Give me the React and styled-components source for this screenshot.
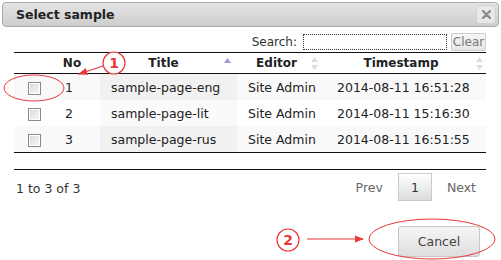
import React from "react";
import styled, { createGlobalStyle } from "styled-components";

const Global = createGlobalStyle`
  html, body {
    margin: 0;
    padding: 0;
    background: #fff;
  }
  body {
    font-family: "DejaVu Sans", Verdana, sans-serif;
    font-size: 12px;
    color: #222;
  }
`;

const Dialog = styled.div`
  position: relative;
  width: 501px;
  height: 260px;
  padding: 2px;
  box-sizing: border-box;
  overflow: hidden;
`;

const TitleBar = styled.div`
  height: 25px;
  box-sizing: border-box;
  border: 1px solid #aaa;
  border-radius: 4px;
  background: linear-gradient(to bottom, #e4e4e4, #cecece);
  display: flex;
  align-items: center;
  justify-content: space-between;
  padding: 0 2px 0 13px;
`;

const Title = styled.span`
  font-weight: bold;
  font-size: 12.5px;
  color: #222;
`;

const CloseButton = styled.button`
  width: 20px;
  height: 19px;
  padding: 0;
  border: 1px solid #d0d0d0;
  border-radius: 3px;
  background: #e8e8e8;
  display: flex;
  align-items: center;
  justify-content: center;
`;

const Content = styled.div`
  padding: 6px 13px 0 12px;
`;

const SearchRow = styled.div`
  display: flex;
  justify-content: flex-end;
  align-items: center;
  height: 18px;
  color: #333;
  font-size: 12px;
`;

const SearchInput = styled.input`
  width: 144px;
  height: 16px;
  box-sizing: border-box;
  border: 1px dotted #333;
  outline: none;
  padding: 0;
  margin: 0 4px 0 6px;
`;

const SmallButton = styled.button`
  width: 35px;
  height: 18px;
  padding: 0;
  border: 1px solid #ccc;
  border-radius: 2px;
  background: linear-gradient(to bottom, #f6f6f6, #e6e6e6);
  color: #777;
  font-family: inherit;
  font-size: 12px;
`;

const Table = styled.table`
  width: 472px;
  margin-top: 1px;
  border-collapse: collapse;
  table-layout: fixed;
  border-top: 1px solid #111;
  border-bottom: 1px solid #111;
`;

const Th = styled.th`
  position: relative;
  height: 20px;
  padding: 0 10px 0 0;
  font-weight: bold;
  font-size: 12px;
  color: #222;
  text-align: center;
  border-bottom: 1px solid #111;
`;

const SortIcon = styled.svg`
  position: absolute;
  right: ${({ $right }) => $right}px;
  top: 4px;
`;

const Tr = styled.tr`
  background: ${({ $odd }) => ($odd ? "#f9f9f9" : "#fff")};
  & + & td {
    border-top: 1px solid #ddd;
  }
`;

const Td = styled.td`
  height: 26px;
  padding: 0 0 0 ${({ $pad }) => $pad}px;
  text-align: ${({ $center }) => ($center ? "center" : "left")};
  font-size: 12.5px;
  color: #222;
  background: ${({ $sorted, $odd }) =>
    $sorted ? ($odd ? "#f1f1f1" : "#fafafa") : "transparent"};
`;

const Check = styled.input`
  appearance: none;
  width: 13px;
  height: 13px;
  margin: 0;
  vertical-align: middle;
  border: 1px solid #8a8a8a;
  box-sizing: border-box;
  background: linear-gradient(135deg, #d8d8d8, #f8f8f8);
  box-shadow: inset 0 0 0 1px #fff;
`;

const Footer = styled.div`
  margin-top: 16px;
  border-top: 1px solid #111;
  width: 472px;
  display: flex;
  justify-content: space-between;
  align-items: flex-start;
  padding-top: 3px;
`;

const Info = styled.div`
  padding: 8px 0 0 2px;
  font-size: 12.5px;
  color: #333;
`;

const Pager = styled.div`
  display: flex;
  align-items: center;
  gap: 15px;
  padding-right: 10px;
`;

const PageLink = styled.span`
  color: #666;
  font-size: 12.5px;
`;

const PageButton = styled.span`
  width: 34px;
  height: 28px;
  box-sizing: border-box;
  display: flex;
  align-items: center;
  justify-content: center;
  border: 1px solid #cacaca;
  background: linear-gradient(to bottom, #fff, #dcdcdc);
  color: #333;
  font-size: 12.5px;
`;

const Actions = styled.div`
  display: flex;
  justify-content: flex-end;
  padding: 25px 6px 0 0;
`;

const CancelButton = styled.button`
  width: 82px;
  height: 31px;
  border: 1px solid #c6c6c6;
  border-radius: 3px;
  background: linear-gradient(to bottom, #f6f6f6, #dedede);
  color: #444;
  font-family: inherit;
  font-size: 12.5px;
`;

const Overlay = styled.svg`
  position: absolute;
  left: 0;
  top: 0;
  pointer-events: none;
`;

const rows = [
  { no: 1, title: "sample-page-eng", editor: "Site Admin", time: "2014-08-11 16:51:28" },
  { no: 2, title: "sample-page-lit", editor: "Site Admin", time: "2014-08-11 15:16:30" },
  { no: 3, title: "sample-page-rus", editor: "Site Admin", time: "2014-08-11 16:51:55" },
];

const Unsorted = ({ right }) => (
  <SortIcon $right={right} width="7" height="14" viewBox="0 0 7 14">
    <path d="M3.5 0 L7 5 L0 5 Z" fill="#dcdcdc" />
    <path d="M0 8 L7 8 L3.5 13 Z" fill="#dcdcdc" />
  </SortIcon>
);

const Asc = ({ right }) => (
  <SortIcon $right={right} width="7" height="14" viewBox="0 0 7 14">
    <path d="M3.5 1 L7 6 L0 6 Z" fill="#9a9ae0" />
  </SortIcon>
);

const red = "#e8383d";

const Badge = ({ cx, cy, n }) => (
  <g>
    <circle cx={cx} cy={cy} r="11" fill="#fff" stroke={red} strokeWidth="1.2" />
    <text
      x={cx}
      y={cy + 5}
      textAnchor="middle"
      fontFamily="'DejaVu Sans', sans-serif"
      fontWeight="bold"
      fontSize="14"
      fill={red}
    >
      {n}
    </text>
  </g>
);

export default function App() {
  return (
    <>
      <Global />
      <Dialog>
        <TitleBar>
          <Title>Select sample</Title>
          <CloseButton aria-label="close">
            <svg width="9" height="9" viewBox="0 0 9 9">
              <path d="M1 1 L8 8 M8 1 L1 8" stroke="#888" strokeWidth="2.2" strokeLinecap="round" />
            </svg>
          </CloseButton>
        </TitleBar>
        <Content>
          <SearchRow>
            <span>Search:</span>
            <SearchInput />
            <SmallButton>Clear</SmallButton>
          </SearchRow>
          <Table>
            <colgroup>
              <col style={{ width: 40 }} />
              <col style={{ width: 46 }} />
              <col style={{ width: 137 }} />
              <col style={{ width: 89 }} />
              <col style={{ width: 160 }} />
            </colgroup>
            <thead>
              <tr>
                <Th />
                <Th>No</Th>
                <Th>
                  Title
                  <Asc right={6} />
                </Th>
                <Th>
                  Editor
                  <Unsorted right={8} />
                </Th>
                <Th>
                  Timestamp
                  <Unsorted right={3} />
                </Th>
              </tr>
            </thead>
            <tbody>
              {rows.map((r, i) => {
                const odd = i % 2 === 0;
                return (
                  <Tr key={r.no} $odd={odd}>
                    <Td $center $pad={0}>
                      <Check type="checkbox" />
                    </Td>
                    <Td $pad={11}>{r.no}</Td>
                    <Td $pad={11} $sorted $odd={odd}>
                      {r.title}
                    </Td>
                    <Td $pad={11}>{r.editor}</Td>
                    <Td $pad={11}>{r.time}</Td>
                  </Tr>
                );
              })}
            </tbody>
          </Table>
          <Footer>
            <Info>1 to 3 of 3</Info>
            <Pager>
              <PageLink>Prev</PageLink>
              <PageButton>1</PageButton>
              <PageLink>Next</PageLink>
            </Pager>
          </Footer>
          <Actions>
            <CancelButton>Cancel</CancelButton>
          </Actions>
        </Content>
        <Overlay width="501" height="260" viewBox="0 0 501 260">
          <defs>
            <marker id="arrow" markerWidth="8" markerHeight="6" refX="7" refY="3" orient="auto">
              <path d="M0 0 L8 3 L0 6 Z" fill={red} />
            </marker>
          </defs>
          <ellipse cx="34" cy="88" rx="30" ry="13" fill="none" stroke={red} strokeWidth="1" />
          <line x1="103" y1="66" x2="79" y2="74" stroke={red} strokeWidth="1.2" markerEnd="url(#arrow)" />
          <Badge cx={114} cy={63} n="1" />
          <ellipse cx="432" cy="239" rx="63" ry="20" fill="none" stroke={red} strokeWidth="1" />
          <line x1="307" y1="239" x2="363" y2="239" stroke={red} strokeWidth="1.2" markerEnd="url(#arrow)" />
          <Badge cx={288} cy={240} n="2" />
        </Overlay>
      </Dialog>
    </>
  );
}
